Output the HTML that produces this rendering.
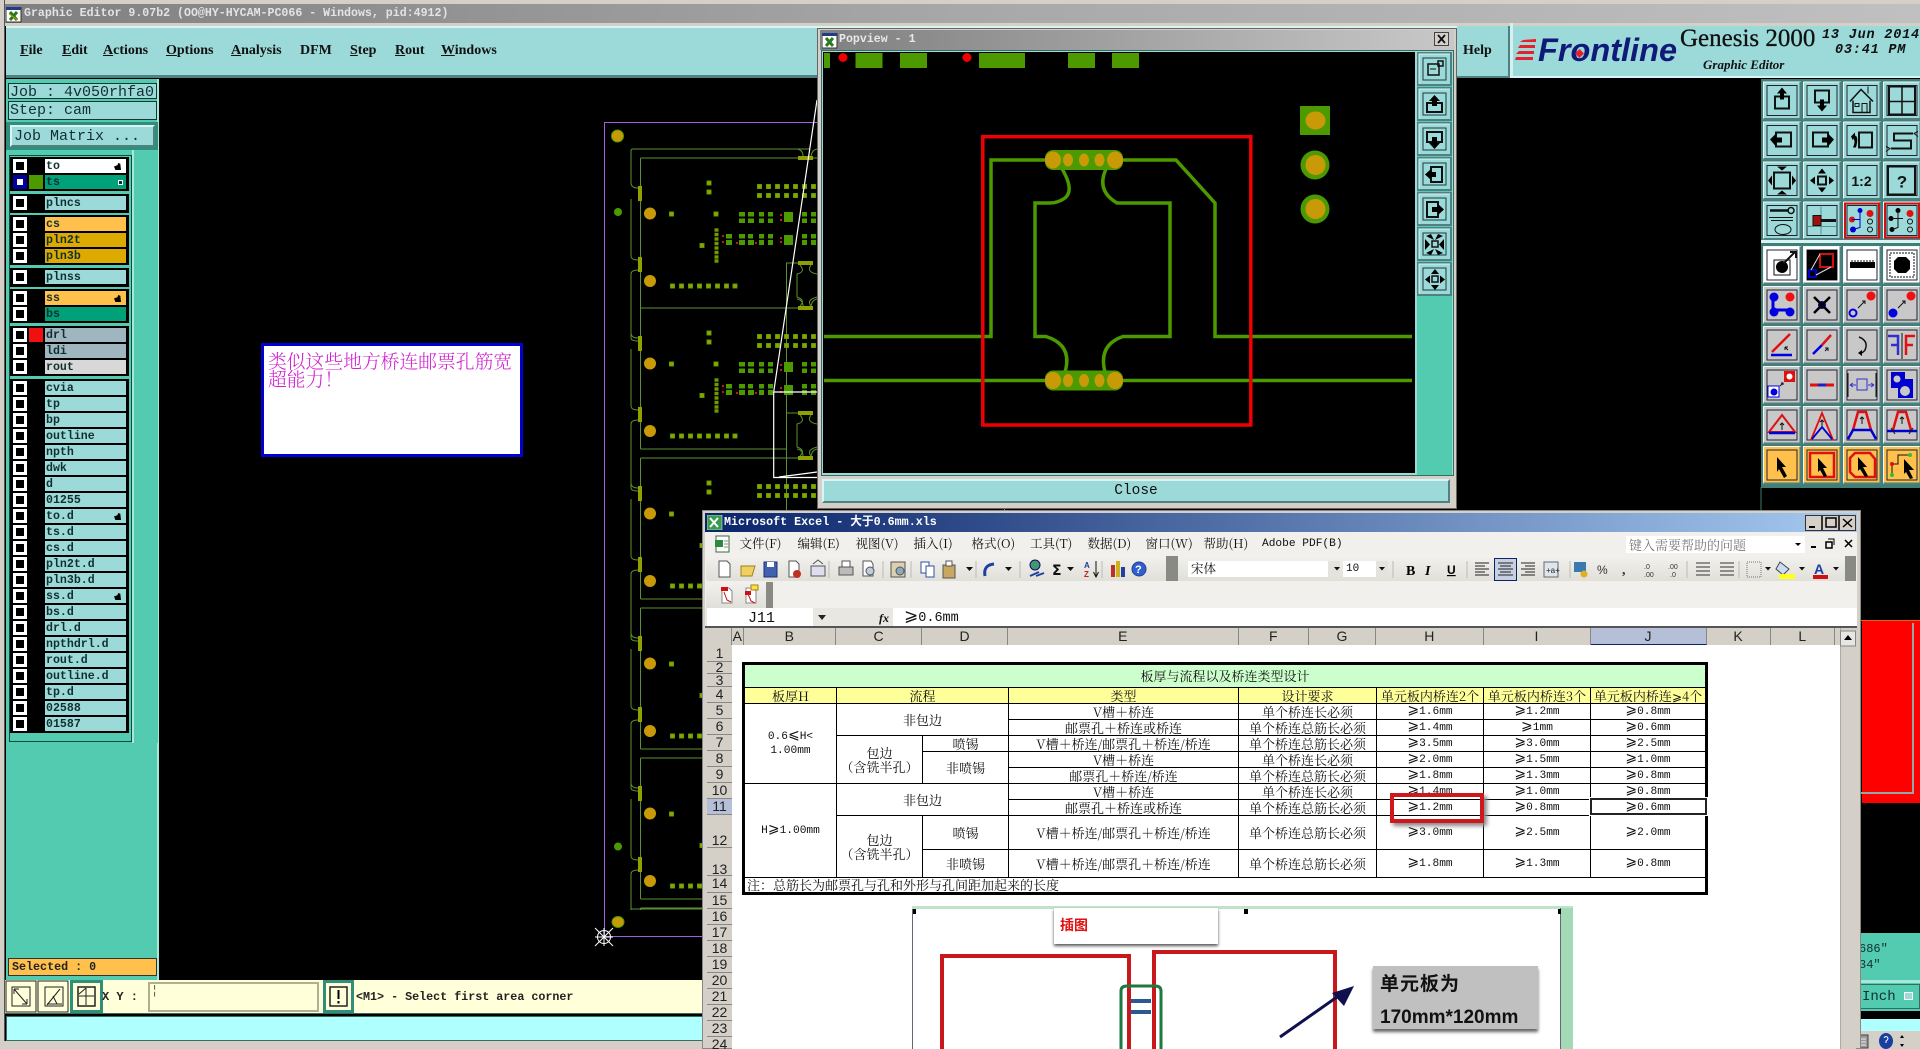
<!DOCTYPE html>
<html lang="zh"><head><meta charset="utf-8"><title>Graphic Editor</title>
<style>
html,body{margin:0;padding:0;background:#000}
#p{position:relative;width:1920px;height:1049px;overflow:hidden;background:#000;font-family:"Liberation Mono","Noto Serif CJK SC",monospace}
#p>div,#p>svg,.a{position:absolute}
.m{font:bold 14px "Liberation Serif",serif;color:#111;top:43px}
.r{position:absolute;left:11px;width:117px;height:15px}
.r i{position:absolute;left:2px;top:0;width:8px;height:8px;border:3px solid #fff;background:#000}
.r b{position:absolute;left:34px;top:0;width:81px;height:14px;background:#9cd9d9;font:bold 11.6px/15px "Liberation Mono",monospace;color:#103030;padding-left:1px;box-sizing:border-box}
.r u{position:absolute;right:5px;top:4px;width:7px;height:7px;background:#000;clip-path:polygon(0 50%,50% 30%,60% 0,90% 10%,100% 100%,20% 100%)}
.g{background:#000;left:10px;width:119px}
.mn{font:12.5px "Noto Serif CJK SC",serif;color:#111;top:534px}
.ch{top:628px;height:17px;background:#d4d0c8;border-right:1px solid #888;box-sizing:border-box;font:14px/17px "Liberation Sans",sans-serif;color:#222;text-align:center}
.rh{left:707px;width:25px;background:#d4d0c8;border-bottom:1px solid #888;box-sizing:border-box;font:14px/15px "Liberation Sans",sans-serif;color:#222;text-align:center}
table{position:absolute;left:742px;top:662px;width:965px;border-collapse:collapse;table-layout:fixed;background:#fff;border:3px solid #000;font:13px/14px "Noto Serif CJK SC",serif;color:#111}
td{border:1px solid #000;padding:0;text-align:center;overflow:hidden;white-space:nowrap}
.n{font:11.2px/14px "Liberation Mono",monospace}
em{font:normal 14px/0 "DejaVu Sans",sans-serif}
</style></head><body><div id="p">

<!-- PCB background -->
<svg style="left:0;top:0" width="1920" height="1049" viewBox="0 0 1920 1049">
<defs>
<clipPath id="cl"><rect x="625" y="100" width="200" height="810"/></clipPath>
<g id="sp"><rect x="-2.5" y="-2.5" width="5" height="5" fill="#4c9900"/><circle r="2" fill="#8fa000"/></g>
<g id="sv"><rect x="-2" y="-1.7" width="4" height="3.4" fill="#6f9a00"/></g>
<g id="bd">
<path fill="none" stroke="#5c9130" d="M638 188Q631 188 631 183M631 199V256Q631 260 638 260M638 270Q631 270 631 274V338M640.5 308V449M640.5 449H786.5V263H798M640.5 308H800M797 149Q803 150 803 156M817 149Q812 150 811 156M800 265Q806 272 797 274V297Q806 300 800 306M811 265Q806 272 817 274M811 306Q806 300 817 297M631 338Q631 341 638 341"/>
<rect x="638" y="186" width="4" height="15" fill="#8fa000"/><rect x="638" y="257" width="4" height="15" fill="#8fa000"/>
<rect x="798" y="156" width="15" height="4" fill="#8fa000"/><rect x="798" y="261" width="15" height="4" fill="#8fa000"/><rect x="798" y="306" width="15" height="4" fill="#8fa000"/>
<circle cx="650" cy="213.5" r="6" fill="#c99a08"/><circle cx="650" cy="281" r="6" fill="#c99a08"/>
<use href="#sp" x="709" y="183"/><use href="#sp" x="709" y="192"/><use href="#sp" x="671.5" y="214"/><use href="#sp" x="716" y="214"/><use href="#sp" x="702" y="245.5"/>
<use href="#sp" x="759.5" y="186.5"/><use href="#sp" x="768.5" y="186.5"/><use href="#sp" x="777.5" y="186.5"/><use href="#sp" x="786.5" y="186.5"/><use href="#sp" x="795.5" y="186.5"/><use href="#sp" x="804.5" y="186.5"/><use href="#sp" x="813.5" y="186.5"/>
<use href="#sp" x="759.5" y="195.5"/><use href="#sp" x="768.5" y="195.5"/><use href="#sp" x="777.5" y="195.5"/><use href="#sp" x="786.5" y="195.5"/><use href="#sp" x="795.5" y="195.5"/><use href="#sp" x="804.5" y="195.5"/><use href="#sp" x="813.5" y="195.5"/>
<use href="#sv" x="716.5" y="230"/><use href="#sv" x="716.5" y="234.5"/><use href="#sv" x="716.5" y="239"/><use href="#sv" x="716.5" y="243.5"/><use href="#sv" x="716.5" y="248"/><use href="#sv" x="716.5" y="252.5"/><use href="#sv" x="716.5" y="257"/><use href="#sv" x="716.5" y="261"/>
<use href="#sp" x="672.5" y="286"/><use href="#sp" x="681.5" y="286"/><use href="#sp" x="690.5" y="286"/><use href="#sp" x="699.5" y="286"/><use href="#sp" x="708.5" y="286"/><use href="#sp" x="717.5" y="286"/><use href="#sp" x="726.5" y="286"/><use href="#sp" x="735" y="286"/>
<path fill="#4c9900" d="M739 212h6v4.500h-6zM748 212h6v4.500h-6zM759 212h5v4.500h-5zM768 212h5v4.500h-5zM739 218.500h6v4.500h-6zM748 218.500h6v4.500h-6zM759 218.500h5v4.500h-5zM768 218.500h5v4.500h-5zM784 212h9v10h-9zM802 212h5v4.500h-5zM811 212h5v4.500h-5zM802 218.500h5v4.500h-5zM811 218.500h5v4.500h-5zM726 234h6v4.500h-6zM739 234h6v4.500h-6zM748 234h5v4.500h-5zM759 234h5v4.500h-5zM768 234h5v4.500h-5zM726 240h6v5h-6zM739 240h6v5h-6zM748 240h6v5h-6zM759 240h5v5h-5zM768 240h5v5h-5zM784 235h9v10h-9zM802 234h5v4.500h-5zM811 234h5v4.500h-5zM802 240h5v5h-5zM811 240h5v5h-5z"/>
<path fill="#c8181c" d="M780 214h2v2h-2zM780 219h2v2h-2zM722 235h2v2h-2zM722 241h2v2h-2zM736 242h2v2h-2zM755 242h2v2h-2zM780 237h2v2h-2zM780 241h2v2h-2z"/>
</g></defs>
<rect x="604.500" y="122.500" width="400" height="814" fill="none" stroke="#a060e0"/>
<ellipse cx="617.500" cy="136" rx="6" ry="6" fill="#c99a08" stroke="#4c9900"/>
<circle cx="618" cy="212" r="4" fill="#4c9900"/>
<path fill="none" stroke="#5c9130" d="M810 149H633Q631 149 631 151V183M640.500 158H820M640.500 158V308"/>
<g clip-path="url(#cl)"><use href="#bd"/><use href="#bd" y="150"/><use href="#bd" y="300"/><use href="#bd" y="450"/><use href="#bd" y="600"/></g>
<path fill="none" stroke="#5c9130" d="M631 899V908Q631 909 633 909H817"/>
<circle cx="618" cy="846.500" r="4" fill="#4c9900"/><ellipse cx="618" cy="922" rx="6" ry="5.500" fill="#c99a08" stroke="#4c9900"/>
<g stroke="#fff" fill="none"><circle cx="604" cy="937" r="6.500"/><path d="M595 928L613 946M613 928L595 946M604 928V946M595 937H613"/></g>
<path d="M817 100L773.700 392H820M773.700 392V477.500H820M779 477L817 472" fill="none" stroke="#fff" stroke-width="1.200"/>
<rect x="1862" y="621" width="58" height="182" fill="#ff0000"/><path d="M1861 620.500H1920" stroke="#e06020"/>
<path d="M1861 793H1913V623" fill="none" stroke="#9aa6a6" stroke-width="2"/>
<path d="M1761 487V510" stroke="#3a7a70"/>
</svg>

<!-- frame -->
<div style="left:0;top:0;width:1920px;height:4px;background:#d4d0c8"></div>
<div style="left:0;top:0;width:5px;height:1049px;background:#d4d0c8;border-right:1px solid #555;box-sizing:border-box"></div>
<div style="left:5px;top:4px;width:1915px;height:19px;background:linear-gradient(90deg,#808080,#a8a8a8 50%,#c0c0c0);color:#e4e4e4;font:bold 11.6px/19px 'Liberation Mono',monospace;padding-left:19px;box-sizing:border-box">Graphic Editor 9.07b2 (OO@HY-HYCAM-PC066 - Windows, pid:4912)</div>
<svg style="left:6px;top:7px" width="16" height="16"><rect width="15" height="15" fill="#fff" stroke="#333"/><rect width="15" height="3" fill="#223a88"/><path d="M4 5L11 13M11 5L4 13" stroke="#2a7a20" stroke-width="3"/><path d="M3 7L12 13" stroke="#c8a000"/></svg>
<div style="left:5px;top:23px;width:1915px;height:3px;background:#d4d0c8"></div>
<div style="left:6px;top:26px;width:1451px;height:52px;background:#9cd9d9;border-top:2px solid #d8f4f4;border-bottom:3px solid #4f8082;box-sizing:border-box"></div>
<div class="m" style="left:20px"><u>F</u>ile</div><div class="m" style="left:62px"><u>E</u>dit</div><div class="m" style="left:103px"><u>A</u>ctions</div><div class="m" style="left:166px"><u>O</u>ptions</div><div class="m" style="left:231px"><u>A</u>nalysis</div><div class="m" style="left:300px">DFM</div><div class="m" style="left:350px"><u>S</u>tep</div><div class="m" style="left:395px"><u>R</u>out</div><div class="m" style="left:441px"><u>W</u>indows</div>

<!-- Help / logo -->
<div style="left:1457px;top:26px;width:53px;height:52px;background:#9cd9d9;border-right:2px solid #4f8082;border-bottom:2px solid #4f8082;box-sizing:border-box;font:bold 14px/50px 'Liberation Serif',serif;padding-left:6px;color:#111">Help</div>
<div style="left:1510px;top:23px;width:3px;height:55px;background:#d4f0f0"></div>
<div style="left:1513px;top:26px;width:407px;height:52px;background:#9cd9d9;border-bottom:2px solid #d8f4f4;box-sizing:border-box"></div>
<svg style="left:1515px;top:36px" width="24" height="28"><path fill="#e8202c" d="M8 4L21 3V6H5zM5 9H20V12H3zM4 15H19V18H1zM1 21H18V24H0z"/></svg>
<div style="left:1538px;top:31px;font:italic bold 32.500px/38px 'Liberation Sans',sans-serif;color:#101a78">Frontline</div>
<svg style="left:1574px;top:48px" width="11" height="11"><path d="M5.500 1L10 5.500L5.500 10L1 5.500z" fill="#e0202c"/></svg>
<div style="left:1680px;top:24px;font:25px/30px 'Liberation Serif',serif;color:#111;-webkit-text-stroke:.3px #111">Genesis 2000</div>
<div style="left:1703px;top:57px;font:italic bold 13px/16px 'Liberation Serif',serif;color:#111">Graphic Editor</div>
<div style="left:1822px;top:28px;font:italic bold 13.500px/15px 'Liberation Mono',monospace;color:#111;white-space:pre;letter-spacing:.8px">13 Jun 2014</div>
<div style="left:1835px;top:43px;font:italic bold 13.500px/15px 'Liberation Mono',monospace;color:#111;white-space:pre;letter-spacing:.8px">03:41 PM</div>

<!-- left panel -->
<div style="left:6px;top:79px;width:153px;height:901px;background:#52cbb0;border-right:2px solid #a8e8d8;box-sizing:border-box"></div>
<div style="left:8px;top:83px;width:149px;height:16px;background:#9cd9d9;border:1px solid #103a30;box-sizing:border-box;font:15px/17px 'Liberation Mono',monospace;color:#103030;padding-left:1px;white-space:pre">Job : 4v050rhfa0</div>
<div style="left:8px;top:101px;width:149px;height:19px;background:#9cd9d9;border:1px solid #103a30;box-sizing:border-box;font:15px/17px 'Liberation Mono',monospace;color:#103030;padding-left:1px;white-space:pre">Step: cam</div>
<div style="left:6px;top:122px;width:152px;height:28px;background:#2f8f7a"></div>
<div style="left:10px;top:125px;width:145px;height:22px;background:#9cd9d9;border:2px solid;border-color:#d8f4f4 #4f8082 #4f8082 #d8f4f4;box-sizing:border-box;font:15px/20px 'Liberation Mono',monospace;color:#103030;padding-left:2px;white-space:pre">Job Matrix ...</div>
<div style="left:9px;top:155px;width:123px;height:587px;background:#52cbb0;border:1px solid #104a3a;box-sizing:border-box"></div>
<div style="left:132px;top:150px;width:26px;height:593px;background:#52cbb0;border-left:2px solid #a8e8d8;box-sizing:border-box"></div>
<div class="g" style="top:157px;height:34px"></div><div class="g" style="top:194px;height:19px"></div><div class="g" style="top:215px;height:50px"></div><div class="g" style="top:268px;height:19px"></div><div class="g" style="top:289px;height:34px"></div><div class="g" style="top:326px;height:50px"></div><div class="g" style="top:379px;height:354px"></div>
<div style="left:0;top:0;width:0;height:0">
<div class="r" style="top:159px"><i></i><b style="background:#fff">to<u></u></b></div>
<div class="r" style="top:175px"><i style="border-color:#0000a0;background:#fff;width:6px;height:6px;border-width:4px"></i><span class="a" style="left:18px;top:0;width:14px;height:14px;background:#4c9900"></span><b style="background:#00a078;color:#103030">ts<span class="a" style="right:3px;top:5px;width:3px;height:3px;border:1px solid #fff;background:#103030"></span></b></div>
<div class="r" style="top:196px"><i></i><b>plncs</b></div>
<div class="r" style="top:217px"><i></i><b style="background:#ffc04c">cs</b></div>
<div class="r" style="top:233px"><i></i><b style="background:#dcaa00">pln2t</b></div>
<div class="r" style="top:249px"><i></i><b style="background:#dcaa00">pln3b</b></div>
<div class="r" style="top:270px"><i></i><b>plnss</b></div>
<div class="r" style="top:291px"><i></i><b style="background:#ffc04c">ss<u></u></b></div>
<div class="r" style="top:307px"><i></i><b style="background:#00a078">bs</b></div>
<div class="r" style="top:328px"><i></i><span class="a" style="left:18px;top:0;width:14px;height:14px;background:#f01010"></span><b style="background:#9fb5c0">drl</b></div>
<div class="r" style="top:344px"><i></i><b style="background:#9fb5c0">ldi</b></div>
<div class="r" style="top:360px"><i></i><b style="background:#d8d8d8">rout</b></div>
<div class="r" style="top:381px"><i></i><b>cvia</b></div>
<div class="r" style="top:397px"><i></i><b>tp</b></div>
<div class="r" style="top:413px"><i></i><b>bp</b></div>
<div class="r" style="top:429px"><i></i><b>outline</b></div>
<div class="r" style="top:445px"><i></i><b>npth</b></div>
<div class="r" style="top:461px"><i></i><b>dwk</b></div>
<div class="r" style="top:477px"><i></i><b>d</b></div>
<div class="r" style="top:493px"><i></i><b>01255</b></div>
<div class="r" style="top:509px"><i></i><b>to.d<u></u></b></div>
<div class="r" style="top:525px"><i></i><b>ts.d</b></div>
<div class="r" style="top:541px"><i></i><b>cs.d</b></div>
<div class="r" style="top:557px"><i></i><b>pln2t.d</b></div>
<div class="r" style="top:573px"><i></i><b>pln3b.d</b></div>
<div class="r" style="top:589px"><i></i><b>ss.d<u></u></b></div>
<div class="r" style="top:605px"><i></i><b>bs.d</b></div>
<div class="r" style="top:621px"><i></i><b>drl.d</b></div>
<div class="r" style="top:637px"><i></i><b>npthdrl.d</b></div>
<div class="r" style="top:653px"><i></i><b>rout.d</b></div>
<div class="r" style="top:669px"><i></i><b>outline.d</b></div>
<div class="r" style="top:685px"><i></i><b>tp.d</b></div>
<div class="r" style="top:701px"><i></i><b>02588</b></div>
<div class="r" style="top:717px"><i></i><b>01587</b></div>
</div>
<div style="left:8px;top:958px;width:149px;height:18px;background:#ffc04c;border:1px solid #333;box-sizing:border-box;font:bold 11.7px/16px 'Liberation Mono',monospace;color:#222;padding-left:3px;white-space:pre">Selected : 0</div>

<!-- bottom toolbar -->
<div style="left:5px;top:980px;width:700px;height:34px;background:#ffffd9;border-bottom:1px solid #3a6a60;box-sizing:border-box"></div>
<svg style="left:5px;top:980px" width="350" height="34">
<g fill="#d8d8c0" stroke="#222"><rect x="1" y="1" width="30" height="31" fill="#ffffd9"/><rect x="33" y="1" width="30" height="31" fill="#ffffd9"/></g>
<rect x="65" y="0" width="33" height="33" fill="#2f8f7a"/><rect x="68" y="3" width="27" height="27" fill="#ffffd9"/>
<rect x="318" y="0" width="31" height="33" fill="#2f8f7a"/><rect x="321" y="3" width="25" height="27" fill="#ffffd9"/>
<g fill="none" stroke="#222"><rect x="7" y="7" width="18" height="19"/><path d="M9 9L22 24M9 9h5M9 9v5M22 24h-5M22 24v-5"/><rect x="40" y="7" width="18" height="19"/><path d="M42 25L55 9M42 24H57M48 16L52 24"/><rect x="73" y="7" width="17" height="19" stroke-width="1.500"/><path d="M81 8V25M74 16H89M74 14L81 8"/><rect x="325" y="7" width="17" height="19" stroke-width="1.500"/></g>
<rect x="332.500" y="10" width="2" height="9"/><rect x="332.500" y="21" width="2" height="2.500"/>
</svg>
<div style="left:102px;top:989px;font:bold 12px/16px 'Liberation Mono',monospace;color:#222;white-space:pre">X Y :</div>
<div style="left:148px;top:982px;width:171px;height:30px;background:#ffffd9;border:2px solid #b0b090;box-sizing:border-box;font:12px/14px 'Liberation Mono',monospace;color:#555;padding-left:1px">¦</div>
<div style="left:356px;top:989px;font:bold 11.700px/16px 'Liberation Mono',monospace;color:#222;white-space:pre">&lt;M1&gt; - Select first area corner</div>
<div style="left:6px;top:1016px;width:700px;height:25px;background:#b0ffff;border:1px solid #3a6a60;box-sizing:border-box"></div>
<div style="left:0;top:1041px;width:706px;height:8px;background:#d4d0c8"></div>

<!-- callout -->
<div style="left:261px;top:343px;width:262px;height:114px;background:#fff;border:3.500px solid #0000d0;box-sizing:border-box;font:300 18.800px/18px 'Noto Serif CJK SC',serif;color:#d020d0;padding:6px 0 0 4px;word-break:break-all">类似这些地方桥连邮票孔筋宽超能力！</div>

<!-- Popview -->
<div style="left:817px;top:28px;width:640px;height:481px;background:#d4d0c8;border:1px solid #666;box-sizing:border-box"></div>
<div style="left:820px;top:30px;width:634px;height:20px;background:linear-gradient(90deg,#808080,#c8c8c8);color:#e8e8e8;font:bold 11.600px/20px 'Liberation Mono',monospace;padding-left:19px;box-sizing:border-box;white-space:pre">Popview - 1</div>
<svg style="left:822px;top:33px" width="16" height="16"><rect width="15" height="15" fill="#fff" stroke="#333"/><rect width="15" height="3" fill="#223a88"/><path d="M4 5L11 13M11 5L4 13" stroke="#2a7a20" stroke-width="3"/></svg>
<svg style="left:1434px;top:32px" width="16" height="15"><rect x=".5" y=".5" width="14" height="13" fill="#d4d0c8" stroke="#444"/><path d="M4 3L11 11M11 3L4 11" stroke="#111" stroke-width="1.800"/></svg>
<div style="left:821px;top:50px;width:633px;height:426px;background:#9cd9d9;border:1px solid #3a6a60;box-sizing:border-box"></div>
<div style="left:823px;top:52px;width:592px;height:421px;background:#000"></div>
<div style="left:1417px;top:52px;width:35px;height:423px;background:#52cbb0"></div>
<div style="left:822px;top:479px;width:628px;height:24px;background:#9cd9d9;border:2px solid;border-color:#d8f4f4 #4f8082 #4f8082 #d8f4f4;box-sizing:border-box;font:14.500px/21px 'Liberation Mono',monospace;color:#111;text-align:center">Close</div>
<svg style="left:0;top:0" width="1460" height="510" viewBox="0 0 1460 510">
<defs><g id="tp"><rect x="-39" y="-10" width="78" height="20" rx="8" fill="#4c9900"/><ellipse cx="-31" rx="8" ry="8.500" fill="#c99a08"/><ellipse cx="31" rx="8" ry="8.500" fill="#c99a08"/><ellipse cx="-16" rx="5" ry="6.500" fill="#c99a08"/><ellipse rx="5" ry="6.500" fill="#c99a08"/><ellipse cx="15.500" rx="5" ry="6.500" fill="#c99a08"/></g></defs>
<path fill="#4c9900" d="M824 53h6v15h-6zM855.500 53h27v15h-27zM900 53h27v15h-27zM979 53h46v15h-46zM1068 53h27v15h-27zM1112 53h27v15h-27z"/>
<circle cx="843" cy="57.500" r="4.500" fill="#f00000"/><circle cx="967" cy="57.500" r="4.500" fill="#f00000"/>
<g fill="none" stroke="#4c9900" stroke-width="3.500">
<path d="M824 336.500H991V160H1176L1215 203V336.500H1412M824 380.500H1412"/>
<path d="M1061 167Q1075 190 1065 198Q1058 203 1050 203H1035V336.500H1046Q1073 345 1065 372M1107 167Q1095 190 1117 203H1170V336.500H1123Q1098 345 1105 372"/>
</g>
<use href="#tp" x="1084" y="160"/><use href="#tp" x="1084" y="380.500"/>
<rect x="982.800" y="136.700" width="268" height="288.300" fill="none" stroke="#f00000" stroke-width="3.500"/>
<rect x="1300" y="106" width="30" height="29" fill="#4c9900"/><ellipse cx="1315.500" cy="120.500" rx="10" ry="9" fill="#c99a08"/>
<ellipse cx="1315" cy="165" rx="14.500" ry="14.500" fill="#4c9900"/><ellipse cx="1315.500" cy="165" rx="10" ry="10" fill="#c99a08"/>
<ellipse cx="1315" cy="209" rx="14.500" ry="14.500" fill="#4c9900"/><ellipse cx="1315.500" cy="209" rx="10" ry="10" fill="#c99a08"/>
<defs><g id="pb"><rect width="33" height="32" fill="#9cd9d9" stroke="#4f8082" stroke-width="2"/><path d="M1 31V1H32" stroke="#d8f4f4" fill="none"/><rect x="5" y="5" width="23" height="22" fill="none" stroke="#1a3a3a"/></g></defs>
<g transform="translate(1418,53)"><use href="#pb"/><path d="M10 11h11v11H10zM20 8h5v5h-5z" fill="none" stroke="#111" stroke-width="1.500"/><path d="M12 16h6" stroke="#111"/></g>
<g transform="translate(1418,88)"><use href="#pb"/><rect x="9" y="15" width="15" height="9" fill="none" stroke="#111" stroke-width="2"/><path d="M16.500 7L11 13h3v5h5v-5h3z"/></g>
<g transform="translate(1418,123)"><use href="#pb"/><rect x="9" y="9" width="15" height="10" fill="none" stroke="#111" stroke-width="2"/><path d="M16.500 26L11 20h3v-6h5v6h3z"/></g>
<g transform="translate(1418,158)"><use href="#pb"/><rect x="13" y="9" width="11" height="15" fill="none" stroke="#111" stroke-width="2"/><path d="M7 16.500L13 11v3h5v5h-5v3z"/></g>
<g transform="translate(1418,193)"><use href="#pb"/><rect x="9" y="9" width="11" height="15" fill="none" stroke="#111" stroke-width="2"/><path d="M26 16.500L20 11v3h-6v5h6v3z"/></g>
<g transform="translate(1418,228)"><use href="#pb"/><rect x="14" y="13" width="6" height="6" fill="none" stroke="#111" stroke-width="1.500"/><path d="M8 8L13 6L16 12ZM25 8L20 6L17 12ZM8 25L13 27L16 21ZM25 25L20 27L17 21ZM7 11L12 16.500L7 22ZM26 11L21 16.500L26 22Z"/></g>
<g transform="translate(1418,263)"><use href="#pb"/><rect x="14" y="13" width="6" height="6" fill="none" stroke="#111" stroke-width="1.500"/><path d="M17 6L21 11H13ZM17 27L21 22H13ZM7 16.500L12 12.500V20.500ZM27 16.500L22 12.500V20.500Z"/></g>
</svg>

<!-- Right icon grid -->
<svg style="left:1760px;top:78px" width="160" height="412" viewBox="1760 78 160 412" font-family="Liberation Sans,sans-serif">
<defs><g id="b"><rect width="38" height="38"/><path d="M.5 37.500V.5H37.500" stroke="#f0f8f8" fill="none"/><path d="M.5 37.500H37.500V.5" stroke="#4f7f7f" stroke-width="2" fill="none"/><rect x="4" y="4" width="30" height="30" fill="none" stroke="#223"/></g></defs>
<rect x="1761" y="79" width="159" height="409" fill="#3f7f78"/>
<rect x="1761" y="240" width="159" height="3" fill="#d8f4f4"/>
<g fill="#9cd9d9">
<use href="#b" x="1763" y="81.500"/><use href="#b" x="1803" y="81.500"/><use href="#b" x="1843" y="81.500"/><use href="#b" x="1883" y="81.500"/>
<use href="#b" x="1763" y="121.500"/><use href="#b" x="1803" y="121.500"/><use href="#b" x="1843" y="121.500"/><use href="#b" x="1883" y="121.500"/>
<use href="#b" x="1763" y="161.500"/><use href="#b" x="1803" y="161.500"/><use href="#b" x="1843" y="161.500"/><use href="#b" x="1883" y="161.500"/>
<use href="#b" x="1763" y="201.500"/><use href="#b" x="1803" y="201.500"/><use href="#b" x="1843" y="201.500"/><use href="#b" x="1883" y="201.500"/></g>
<g fill="#fff"><use href="#b" x="1763" y="246"/><use href="#b" x="1803" y="246"/><use href="#b" x="1843" y="246"/><use href="#b" x="1883" y="246"/></g>
<g fill="#c8c8c8">
<use href="#b" x="1763" y="286"/><use href="#b" x="1803" y="286"/><use href="#b" x="1843" y="286"/><use href="#b" x="1883" y="286"/>
<use href="#b" x="1763" y="326"/><use href="#b" x="1803" y="326"/><use href="#b" x="1843" y="326"/><use href="#b" x="1883" y="326"/>
<use href="#b" x="1763" y="366"/><use href="#b" x="1803" y="366"/><use href="#b" x="1843" y="366"/><use href="#b" x="1883" y="366"/>
<use href="#b" x="1763" y="406"/><use href="#b" x="1803" y="406"/><use href="#b" x="1843" y="406"/><use href="#b" x="1883" y="406"/></g>
<g fill="#ffc04c"><use href="#b" x="1763" y="446"/><use href="#b" x="1803" y="446"/><use href="#b" x="1843" y="446"/><use href="#b" x="1883" y="446"/></g>
<!-- r1 -->
<g transform="translate(1763,81.500)"><rect x="12" y="15" width="14" height="12" fill="none" stroke="#111" stroke-width="2"/><path d="M19 6L14 12h3v6h4v-6h3z"/></g>
<g transform="translate(1803,81.500)"><rect x="12" y="9" width="14" height="12" fill="none" stroke="#111" stroke-width="2"/><path d="M19 30L14 24h3v-6h4v6h3z"/></g>
<g transform="translate(1843,81.500)" fill="none" stroke="#111"><path d="M7 20L18 8L30 20M10 19V31H27V19" stroke-width="1.500"/><rect x="12" y="22" width="4" height="3"/><rect x="19" y="22" width="5" height="9"/><path d="M25 12V5"/></g>
<g transform="translate(1883,81.500)" fill="none" stroke="#111"><rect x="6" y="5" width="26" height="28" stroke-width="2"/><path d="M19 5V33M6 20H32" stroke-width="1.500"/></g>
<!-- r2 -->
<g transform="translate(1763,121.500)"><rect x="13" y="11" width="15" height="14" fill="none" stroke="#111" stroke-width="2"/><path d="M7 18L13 12v4h6v5h-6v4z"/></g>
<g transform="translate(1803,121.500)"><rect x="10" y="11" width="15" height="14" fill="none" stroke="#111" stroke-width="2"/><path d="M31 18L25 12v4h-6v5h6v4z"/></g>
<g transform="translate(1843,121.500)"><rect x="16" y="11" width="13" height="15" fill="none" stroke="#111" stroke-width="2"/><path d="M8 15L12 11v3q4 1 1 12h-3q3-7 0-9v2z"/></g>
<g transform="translate(1883,121.500)" fill="none" stroke="#111"><path d="M30 12H11V19H28V27H8" stroke-width="2"/><path d="M35 10L31 12L35 15M3 25L7 27L3 30"/></g>
<!-- r3 -->
<g transform="translate(1763,161.500)"><rect x="11" y="11" width="16" height="16" fill="none" stroke="#111" stroke-width="2"/><path d="M19 9L14 5H24ZM19 29L14 33H24ZM5 19L9 14V24ZM33 19L29 14V24Z"/></g>
<g transform="translate(1803,161.500)"><rect x="15" y="15" width="8" height="8" fill="none" stroke="#111" stroke-width="2"/><path d="M19 7L15 12H23ZM19 31L15 26H23ZM7 19L12 15V23ZM31 19L26 15V23Z"/></g>
<text x="1861.500" y="186" text-anchor="middle" font-size="14" font-weight="bold" fill="#111">1:2</text>
<g transform="translate(1883,161.500)"><rect x="5" y="5" width="27" height="28" fill="none" stroke="#111" stroke-width="2"/><text x="19" y="26" text-anchor="middle" font-size="17" font-weight="bold" fill="#111">?</text></g>
<!-- r4 -->
<g transform="translate(1763,201.500)" fill="none" stroke="#111"><path d="M7 9H26" stroke-width="2.500"/><circle cx="28" cy="9" r="3" stroke-width="1.500"/><path d="M6 16H30M8 19H30"/><ellipse cx="20" cy="28" rx="8" ry="5"/></g>
<g transform="translate(1803,201.500)"><path d="M18 5V33M5 25H33" stroke="#5a9090" fill="none"/><rect x="10" y="14" width="8" height="10" fill="#a01010" stroke="#111"/><path d="M18 19H33" stroke="#111" stroke-width="3"/></g>
<g transform="translate(1843,201.500)"><rect x="2" y="2" width="34" height="34" fill="none" stroke="#d01010" stroke-width="2"/><circle cx="9" cy="18" r="3" fill="#e01010"/><circle cx="17" cy="9" r="2.500" fill="#0000d0"/><circle cx="10" cy="28" r="3" fill="#0000d0"/><path d="M17 9V26L10 28M9 18H17" fill="none" stroke="#0000d0"/><circle cx="27" cy="12" r="3.500" fill="#e01010"/><circle cx="27" cy="20" r="2.500" fill="none" stroke="#111"/><circle cx="27" cy="28" r="2.500" fill="none" stroke="#111"/></g>
<g transform="translate(1883,201.500)"><rect x="2" y="2" width="34" height="34" fill="none" stroke="#d01010" stroke-width="2"/><circle cx="8" cy="17" r="2.500"/><circle cx="15" cy="9" r="2.500"/><circle cx="9" cy="28" r="2.500"/><path d="M15 9V26L9 28M8 17H20" fill="none" stroke="#111"/><circle cx="27" cy="12" r="3.500" fill="#e01010"/><circle cx="27" cy="20" r="2.500" fill="none" stroke="#111"/><circle cx="27" cy="28" r="2.500" fill="none" stroke="#111"/></g>
<!-- r5 -->
<g transform="translate(1763,246)"><circle cx="19" cy="21" r="6"/><rect x="11" y="14" width="16" height="15" fill="none" stroke="#111"/><path d="M21 17L32 6M27 6H33V12" stroke="#111" stroke-width="2" fill="none"/></g>
<g transform="translate(1803,246)"><rect x="4" y="4" width="30" height="30"/><rect x="17" y="8" width="13" height="13" fill="none" stroke="#d01010" stroke-width="2"/><rect x="6" y="24" width="7" height="7" fill="none" stroke="#0000d0" stroke-width="2"/><path d="M8 24L17 8M13 29L28 21" stroke="#ddd"/></g>
<g transform="translate(1843,246)"><rect x="7" y="16" width="25" height="6"/><path d="M9 14V17M12 14V17M15 14V17M18 14V17M21 14V17M24 14V17M27 14V17M30 14V17" stroke="#111"/></g>
<g transform="translate(1883,246)"><rect x="7" y="7" width="24" height="24" fill="none" stroke="#111" stroke-dasharray="2 1"/><path d="M15 11H23L27 15V23L23 27H15L11 23V15Z"/></g>
<!-- r6 -->
<g transform="translate(1763,286)"><path d="M10 10V24H26" fill="none" stroke="#0000e0" stroke-width="3"/><circle cx="11" cy="11" r="4.500" fill="#0000e0"/><circle cx="11" cy="26" r="4.500" fill="#0000e0"/><circle cx="27" cy="26" r="4.500" fill="#0000e0"/><circle cx="27" cy="11" r="4.500" fill="#f01010"/></g>
<g transform="translate(1803,286)"><circle cx="19" cy="19" r="4" fill="#000090"/><path d="M11 11L27 27M27 11L11 27" stroke="#000" stroke-width="2.500"/></g>
<g transform="translate(1843,286)"><circle cx="28" cy="10" r="4.500" fill="#f01010"/><circle cx="10" cy="27" r="3.500" fill="none" stroke="#0000e0" stroke-width="2"/><path d="M15 22L22 15M19 15H22V18" stroke="#111" fill="none"/></g>
<g transform="translate(1883,286)"><circle cx="28" cy="10" r="4.500" fill="#f01010"/><circle cx="10" cy="27" r="4.500" fill="#0000e0"/><path d="M15 22L22 15M19 15H22V18" stroke="#111" fill="none"/></g>
<!-- r7 -->
<g transform="translate(1763,326)"><path d="M9 26L27 8" stroke="#e01010" stroke-width="2.500"/><path d="M8 29H29" stroke="#0000e0" stroke-width="2.500"/><path d="M22 21L25 24M22 21V24M22 21H25" stroke="#111" fill="none"/></g>
<g transform="translate(1803,326)"><path d="M10 28L19 19" stroke="#0000e0" stroke-width="2.500"/><path d="M19 19L28 9" stroke="#e01010" stroke-width="2.500"/><path d="M22 25L25 22M22 22H25V25" stroke="#111" fill="none"/></g>
<g transform="translate(1843,326)"><path d="M16 11Q26 15 22 24Q20 27 17 27" fill="none" stroke="#111" stroke-width="1.500"/><path d="M15 27L19 24V30Z"/></g>
<g transform="translate(1883,326)"><path d="M5 10H15V29M8 19H14" fill="none" stroke="#3030d0" stroke-width="2.500"/><path d="M19 7V33" stroke="#111"/><path d="M32 10H23V29M23 19H30" fill="none" stroke="#e01010" stroke-width="2.500"/></g>
<!-- r8 -->
<g transform="translate(1763,366)"><rect x="21" y="5" width="11" height="11" fill="#e01010"/><circle cx="26.500" cy="10.500" r="3" fill="#fff"/><rect x="5" y="20" width="11" height="11" fill="#fff" stroke="#0000e0"/><circle cx="11" cy="26" r="3.500" fill="#0000e0"/><path d="M17 20L20 17M18 17H20V19" stroke="#111" fill="none"/></g>
<g transform="translate(1803,366)"><path d="M7 19H31" stroke="#e01010" stroke-width="3"/><path d="M15 19H23" stroke="#2020c0" stroke-width="3"/></g>
<g transform="translate(1843,366)" fill="none" stroke="#3030d0"><path d="M5 7V31M33 7V31" stroke="#111"/><rect x="14" y="13" width="10" height="11"/><path d="M7 19H13M25 19H31M7 19L10 17M7 19L10 21M31 19L28 17M31 19L28 21"/></g>
<g transform="translate(1883,366)"><path d="M8 6H22V13H30V32H15V22H8Z" fill="#0000d0"/><circle cx="14" cy="13" r="3.500" fill="#c8c8c8"/><circle cx="22" cy="25" r="5" fill="#c8c8c8"/></g>
<!-- r9 -->
<g transform="translate(1763,406)"><path d="M19 9L6 26H32Z" fill="none" stroke="#e01010" stroke-width="2"/><path d="M6 27H32" stroke="#0000d0" stroke-width="2.500"/><path d="M19 17V24M17 19L19 17L21 19" stroke="#111" fill="none"/></g>
<g transform="translate(1803,406)"><path d="M8 34L19 7L30 34" fill="none" stroke="#e01010" stroke-width="1.800"/><path d="M9 33L19 21L29 33" fill="none" stroke="#0000d0" stroke-width="1.800"/><path d="M19 14V20M17 16L19 14L21 16" stroke="#111" fill="none"/></g>
<g transform="translate(1843,406)"><path d="M10 24L15 6H23L28 24" fill="none" stroke="#e01010" stroke-width="2.500"/><path d="M5 33L10 24H28L33 33" fill="none" stroke="#0000d0" stroke-width="2.500"/><path d="M19 11V18M17 13L19 11L21 13" stroke="#111" fill="none"/></g>
<g transform="translate(1883,406)"><path d="M10 24L15 6H23L28 24" fill="none" stroke="#e01010" stroke-width="2.500"/><path d="M4 25H34" stroke="#0000d0" stroke-width="2.500"/><path d="M8 22L12 28M30 22L26 28" stroke="#111"/><path d="M19 11V18M17 13L19 11L21 13" stroke="#111" fill="none"/></g>
<!-- r10 -->
<g transform="translate(1763,446)"><path d="M14 11L23 21L19 21L24 30L21 32L16 23L14 26Z"/></g>
<g transform="translate(1803,446)"><rect x="7" y="7" width="24" height="24" fill="none" stroke="#e01010" stroke-width="2.500"/><path d="M15 12L24 22L20 22L24 30L21 31L17 24L15 26Z"/></g>
<g transform="translate(1843,446)"><path d="M12 7H27L32 13V31H12L7 26V12Z" fill="none" stroke="#e01010" stroke-width="2.500"/><path d="M15 11L24 21L20 21L25 30L22 31L17 23L15 25Z"/></g>
<g transform="translate(1883,446)"><path d="M9 30V18H15V9H26" fill="none" stroke="#111"/><circle cx="9" cy="18" r="2" fill="#e01010"/><circle cx="9" cy="29" r="2" fill="#30c030"/><circle cx="27" cy="9" r="2" fill="#30c030"/><path d="M21 13L31 24L26 24L30 32L27 33L23 26L21 28Z"/></g>
<rect x="1761" y="486" width="159" height="2" fill="#3f7f78"/>
</svg>

<!-- right bottom -->
<div style="left:1860px;top:933px;width:60px;height:116px;background:#52cbb0"></div>
<div style="left:1859px;top:941px;font:12px/16px 'Liberation Mono',monospace;color:#103030;white-space:pre">686"</div>
<div style="left:1859px;top:957px;font:12px/16px 'Liberation Mono',monospace;color:#103030;white-space:pre">34"</div>
<div style="left:1860px;top:980px;width:60px;height:3px;background:#a8e8d8"></div>
<div style="left:1858px;top:984px;width:62px;height:25px;background:#52cbb0;border:1px solid #2f6f60;box-sizing:border-box;font:14px/24px 'Liberation Mono',monospace;color:#103030;padding-left:3px">Inch</div>
<div style="left:1904px;top:992px;width:9px;height:8px;background:#9cd9d9;border:1px solid #fff;box-sizing:border-box"></div>
<div style="left:1860px;top:1011px;width:60px;height:8px;background:#000"></div>
<div style="left:1860px;top:1019px;width:60px;height:12px;background:#b0ffff"></div>
<div style="left:1850px;top:1031px;width:70px;height:18px;background:#d4d0c8"></div>
<svg style="left:1850px;top:1031px" width="70" height="18"><rect x="5" y="4" width="13" height="13" fill="#999" stroke="#444"/><path d="M7 8H16M7 11H16M7 14H16" stroke="#eee"/><ellipse cx="36" cy="10" rx="7" ry="8" fill="#1a3fa0"/><path d="M34 7Q36 4 38 7Q38 9 36 10V12" fill="none" stroke="#fff"/><path d="M50 7H54L52 4ZM50 13H54L52 16Z"/></svg>

<!-- Excel -->
<div style="left:702px;top:510px;width:1159px;height:539px;background:#d4d0c8;border:1px solid #888;box-sizing:border-box"></div>
<div style="left:705px;top:513px;width:1152px;height:19px;background:linear-gradient(90deg,#0a246a,#a6caf0);color:#fff;font:bold 11.700px/19px 'Liberation Mono','Noto Sans CJK SC',monospace;padding-left:19px;box-sizing:border-box;white-space:pre">Microsoft Excel - 大于0.6mm.xls</div>
<svg style="left:707px;top:515px" width="16" height="15"><rect width="15" height="15" fill="#3a9a50" stroke="#fff" stroke-width=".5"/><path d="M3 3L11 12M11 3L3 12" stroke="#fff" stroke-width="2"/></svg>
<svg style="left:1805px;top:515px" width="52" height="16"><g fill="#d4d0c8" stroke="#333"><rect x=".5" y=".5" width="16" height="15"/><rect x="17.500" y=".5" width="16" height="15"/><rect x="34.500" y=".5" width="16" height="15"/></g><path d="M4 12H10" stroke="#000" stroke-width="2"/><rect x="21" y="3" width="10" height="9" fill="none" stroke="#000" stroke-width="1.500"/><path d="M38 4L47 12M47 4L38 12" stroke="#000" stroke-width="1.500"/></svg>
<div style="left:705px;top:532px;width:1152px;height:76px;background:#f1f0ed"></div>
<div class="mn" style="left:739.500px">文件(F)</div><div class="mn" style="left:797.500px">编辑(E)</div><div class="mn" style="left:855.500px">视图(V)</div><div class="mn" style="left:913.500px">插入(I)</div><div class="mn" style="left:971.500px">格式(O)</div><div class="mn" style="left:1030px">工具(T)</div><div class="mn" style="left:1087.500px">数据(D)</div><div class="mn" style="left:1145.500px">窗口(W)</div><div class="mn" style="left:1203.500px">帮助(H)</div>
<div style="left:1262px;top:537px;font:11.200px/15px 'Liberation Mono',monospace;color:#111;white-space:pre">Adobe PDF(B)</div>
<svg style="left:714px;top:534px" width="18" height="20"><rect x="2" y="2" width="13" height="16" fill="#fff" stroke="#3a6a3a"/><rect x="1" y="6" width="8" height="7" fill="#2a8a40"/><path d="M10 7h4M10 10h4M10 13h4" stroke="#888"/></svg>
<div style="left:1626px;top:536px;width:179px;height:17px;background:#fff;font:13px/17px 'Noto Serif CJK SC',serif;color:#777;padding-left:3px;box-sizing:border-box">键入需要帮助的问题</div>
<svg style="left:1795px;top:536px" width="62" height="18"><path d="M0 7H6L3 10Z"/><path d="M16 11H21" stroke="#000" stroke-width="2"/><rect x="31" y="6" width="6" height="6" fill="none" stroke="#000" stroke-width="1.500"/><path d="M33 3H39V9" fill="none" stroke="#000"/><path d="M50 4L57 11M57 4L50 11" stroke="#000" stroke-width="1.500"/></svg>

<div style="left:706px;top:556px;width:1150px;height:25px;background:linear-gradient(180deg,#f2f1ee,#e0dfd8);border-radius:3px"></div>
<div style="left:706px;top:582px;width:67px;height:26px;background:linear-gradient(180deg,#f2f1ee,#e0dfd8)"></div>
<div style="left:766px;top:582px;width:7px;height:26px;background:#8a8a84"></div>
<div style="left:1166px;top:556px;width:12px;height:25px;background:#8a8a84"></div>
<div style="left:1845px;top:556px;width:11px;height:25px;background:#8a8a84"></div>
<svg style="left:705px;top:556px" width="480" height="52">
<g fill="none" stroke="#555">
<path d="M14 5H22L25 8V21H14Z" fill="#fff"/>
<path d="M36 10H50L47 20H36Z" fill="#f0d060" stroke="#a08020"/>
<rect x="59" y="6" width="13" height="15" fill="#4060b0" stroke="#203070"/><rect x="62" y="6" width="7" height="5" fill="#fff" stroke="none"/>
<path d="M84 5H91L94 8V21H84Z" fill="#fff"/><circle cx="92" cy="18" r="4" fill="#c03020" stroke="none"/>
<rect x="106" y="10" width="14" height="10" fill="#dde"/><path d="M108 8L113 4L118 8" />
<path d="M124 5V22" stroke="#bbb"/>
<rect x="134" y="11" width="14" height="8" fill="#bbb"/><rect x="137" y="5" width="8" height="6" fill="#fff"/>
<path d="M158 5H166L168 8V20H158Z" fill="#fff"/><circle cx="165" cy="15" r="4" fill="#bcd"/>
<path d="M178 5V22" stroke="#bbb"/>
<rect x="186" y="6" width="14" height="15" fill="#dcd0b0"/><circle cx="195" cy="15" r="4" fill="#8ab"/>
<path d="M206 5V22" stroke="#bbb"/>
<rect x="216" y="6" width="8" height="11" fill="#fff" stroke="#3050a0"/><rect x="221" y="10" width="8" height="11" fill="#fff" stroke="#3050a0"/>
<rect x="238" y="9" width="12" height="13" fill="#c8a860"/><rect x="241" y="5" width="6" height="5" fill="#fff"/>
<path d="M271 5V22" stroke="#bbb"/>
<path d="M289 8Q278 9 280 20" stroke="#2040a0" stroke-width="3"/>
<path d="M315 5V22" stroke="#bbb"/>
<circle cx="330" cy="9" r="5" fill="#3a9a70" stroke="#206"/><path d="M325 20L334 16M331 20L339 17" stroke="#2040a0" stroke-width="2"/>
<path d="M397 5V22" stroke="#bbb"/>
<rect x="406" y="9" width="4" height="12" fill="#c03020" stroke="none"/><rect x="411" y="5" width="4" height="16" fill="#d0b020" stroke="none"/><rect x="416" y="11" width="4" height="10" fill="#2040a0" stroke="none"/>
<circle cx="434" cy="13" r="7" fill="#3060d0" stroke="#204090"/>
</g>
<path d="M261 11H268L264.500 15ZM300 11H307L303.500 15ZM362 11H369L365.500 15Z" fill="#111"/>
<text x="347" y="19" font-family="DejaVu Sans,sans-serif" font-size="14" font-weight="bold" fill="#111">Σ</text>
<text x="379" y="12" font-family="Liberation Sans,sans-serif" font-size="8" font-weight="bold" fill="#2040a0">A</text>
<text x="379" y="21" font-family="Liberation Sans,sans-serif" font-size="8" font-weight="bold" fill="#c02020">Z</text>
<path d="M391 5V20M388.500 16L391 21L393.500 16" fill="none" stroke="#111"/>
<text x="430" y="17" font-family="Liberation Sans,sans-serif" font-size="11" font-weight="bold" fill="#fff">?</text>
<g><path d="M17 32H24L27 35V47H17Z" fill="#fff" stroke="#888"/><path d="M16 31H23V35H16Z" fill="#d01010"/><path d="M19 36L22 44L26 46" fill="none" stroke="#d01010"/><path d="M41 32H48L51 35V47H41Z" fill="#fff" stroke="#888"/><path d="M40 35H46V39H40Z" fill="#d01010"/><rect x="46" y="29" width="7" height="5" fill="#ffe040" stroke="#a08020"/><path d="M43 38L46 45L50 47" fill="none" stroke="#d01010"/></g>
</svg>
<div style="left:1188px;top:561px;width:152px;height:16px;background:#fff;font:12.500px/15px 'Noto Serif CJK SC',serif;color:#111;padding-left:3px;box-sizing:border-box">宋体</div>
<div style="left:1328px;top:561px;width:12px;height:16px;background:#e4e3de"></div>
<div style="left:1343px;top:561px;width:45px;height:16px;background:#fff;font:11px/16px 'Liberation Mono',monospace;color:#111;padding-left:3px;box-sizing:border-box">10</div>
<div style="left:1376px;top:561px;width:12px;height:16px;background:#e4e3de"></div>
<svg style="left:1320px;top:556px" width="530" height="26">
<path d="M14 11H20L17 14.500ZM59 11H65L62 14.500Z" fill="#111"/>
<path d="M73 5V22M147 5V22M250 5V22M367 5V22M419 5V22" stroke="#bbb"/>
<rect x="174.500" y="2.500" width="22" height="22" fill="#c8d0e0" stroke="#0a246a"/>
<text x="86" y="19" font-family="Liberation Serif,serif" font-size="14" font-weight="bold">B</text>
<text x="105" y="19" font-family="Liberation Serif,serif" font-size="14" font-style="italic" font-weight="bold">I</text>
<text x="127" y="18" font-family="Liberation Sans,sans-serif" font-size="12" font-weight="bold" text-decoration="underline">U</text>
<g stroke="#222"><path d="M155 7H169M155 10H165M155 13H169M155 16H165M155 19H169M178 7H193M180 10H191M178 13H193M180 16H191M178 19H193M201 7H215M205 10H215M201 13H215M205 16H215M201 19H215"/></g>
<rect x="224" y="6" width="14" height="15" fill="#dfe6ea" stroke="#667"/><text x="226" y="17" font-family="Liberation Sans,sans-serif" font-size="8" fill="#223">+a+</text>
<rect x="254" y="6" width="12" height="10" fill="#3a7ab0"/><circle cx="264" cy="18" r="3.500" fill="#e0b020"/>
<text x="277" y="18" font-family="Liberation Sans,sans-serif" font-size="12" fill="#333">%</text>
<text x="302" y="18" font-family="Liberation Serif,serif" font-size="14" font-weight="bold" fill="#333">,</text>
<text x="324" y="13" font-family="Liberation Sans,sans-serif" font-size="7" fill="#333">.0</text><text x="324" y="21" font-family="Liberation Sans,sans-serif" font-size="7" fill="#333">.00</text>
<text x="348" y="13" font-family="Liberation Sans,sans-serif" font-size="7" fill="#333">.00</text><text x="350" y="21" font-family="Liberation Sans,sans-serif" font-size="7" fill="#333">.0</text>
<path d="M376 7H390M376 11H390M376 15H390M376 19H390M400 7H414M400 11H414M400 15H414M400 19H414" stroke="#333"/>
<rect x="427" y="6" width="14" height="15" fill="none" stroke="#777" stroke-dasharray="1 1"/><path d="M445 11H451L448 14.500Z" fill="#111"/>
<path d="M460 6L469 13L463 19L456 13Z" fill="#cde" stroke="#445"/><rect x="459" y="18" width="16" height="5" fill="#ffff20"/><path d="M479 11H485L482 14.500Z" fill="#111"/>
<text x="494" y="18" font-family="Liberation Sans,sans-serif" font-size="14" font-weight="bold" fill="#1a3fa0">A</text><rect x="493" y="19" width="15" height="4" fill="#d01010"/><path d="M513 11H519L516 14.500Z" fill="#111"/>
</svg>

<!-- Formula -->
<div style="left:705px;top:608px;width:1152px;height:19px;background:#e8e7e2"></div>
<div style="left:707px;top:608px;width:106px;height:18px;background:#fff;font:15px/22px 'Liberation Mono',monospace;color:#111;padding-left:41px;box-sizing:border-box;overflow:hidden">J11</div>
<div style="left:818px;top:615px;width:0;height:0;border:4px solid transparent;border-top:5px solid #222;border-bottom:0"></div>
<div style="left:879px;top:609px;font:italic bold 12px/18px 'Liberation Serif',serif;color:#111">fx</div>
<div style="left:893px;top:608px;width:964px;height:18px;background:#fff;font:13.500px/22px 'Liberation Mono',monospace;color:#111;padding-left:11px;box-sizing:border-box;overflow:hidden"><em style="font-size:17px">⩾</em>0.6mm</div>

<!-- headers -->
<div style="left:705px;top:626px;width:1152px;height:2px;background:#555"></div>
<div style="left:707px;top:628px;width:25px;height:17px;background:#d4d0c8;border-right:1px solid #888;box-sizing:border-box"></div>
<div class="ch" style="left:732px;width:11.500px">A</div><div class="ch" style="left:743.500px;width:92.500px">B</div><div class="ch" style="left:836px;width:86px">C</div><div class="ch" style="left:922px;width:86px">D</div><div class="ch" style="left:1008px;width:230.500px">E</div><div class="ch" style="left:1238.500px;width:70.500px">F</div><div class="ch" style="left:1309px;width:67px">G</div><div class="ch" style="left:1376px;width:107.500px">H</div><div class="ch" style="left:1483.500px;width:107px">I</div><div class="ch" style="left:1590.500px;width:116px;background:#b5bfd8;border-bottom:1px solid #0a246a">J</div><div class="ch" style="left:1706.500px;width:64px">K</div><div class="ch" style="left:1770.500px;width:64.500px">L</div>
<div style="left:1835px;top:628px;width:5px;height:17px;background:#d4d0c8"></div>
<div style="left:732px;top:645px;width:1108px;height:404px;background:#fff"></div>
<div style="left:1840px;top:628px;width:16px;height:421px;background:#d4d0c8;border-left:1px solid #aaa;box-sizing:border-box"></div>
<svg style="left:1840px;top:628px" width="16" height="20"><rect x=".5" y="3" width="15" height="15" fill="#e8e6e0" stroke="#888"/><path d="M8 7L12 12H4Z"/></svg>

<div class="rh" style="top:646px;height:16px">1</div><div class="rh" style="top:662px;height:12px;line-height:10px">2</div><div class="rh" style="top:674px;height:13px;line-height:12px">3</div><div class="rh" style="top:687px;height:16px">4</div><div class="rh" style="top:703px;height:16px">5</div><div class="rh" style="top:719px;height:16px">6</div><div class="rh" style="top:735px;height:16px">7</div><div class="rh" style="top:751px;height:16px">8</div><div class="rh" style="top:767px;height:16px">9</div><div class="rh" style="top:783px;height:16px">10</div><div class="rh" style="top:799px;height:16px;background:#b5bfd8">11</div><div class="rh" style="top:815px;height:33px;line-height:50px">12</div><div class="rh" style="top:848px;height:28px;line-height:42px">13</div><div class="rh" style="top:876px;height:17px">14</div><div class="rh" style="top:893px;height:16px">15</div><div class="rh" style="top:909px;height:16px">16</div><div class="rh" style="top:925px;height:16px">17</div><div class="rh" style="top:941px;height:16px">18</div><div class="rh" style="top:957px;height:16px">19</div><div class="rh" style="top:973px;height:16px">20</div><div class="rh" style="top:989px;height:16px">21</div><div class="rh" style="top:1005px;height:16px">22</div><div class="rh" style="top:1021px;height:16px">23</div><div class="rh" style="top:1037px;height:12px">24</div>

<table>
<colgroup><col style="width:93px"><col style="width:86px"><col style="width:86px"><col style="width:230px"><col style="width:138px"><col style="width:107px"><col style="width:107px"><col style="width:116px"></colgroup>
<tr style="height:24px;background:#ccffcc"><td colspan="8">板厚与流程以及桥连类型设计</td></tr>
<tr style="height:16px;background:#ffff99"><td>板厚H</td><td colspan="2">流程</td><td>类型</td><td>设计要求</td><td>单元板内桥连2个</td><td>单元板内桥连3个</td><td>单元板内桥连<em style="font-size:12px">⩾</em>4个</td></tr>
<tr style="height:16px"><td rowspan="5" class="n">0.6<em>⩽</em>H&lt;<br>1.00mm</td><td colspan="2" rowspan="2">非包边</td><td>V槽＋桥连</td><td>单个桥连长必须</td><td class="n"><em>⩾</em>1.6mm</td><td class="n"><em>⩾</em>1.2mm</td><td class="n"><em>⩾</em>0.8mm</td></tr>
<tr style="height:16px"><td>邮票孔＋桥连或桥连</td><td>单个桥连总筋长必须</td><td class="n"><em>⩾</em>1.4mm</td><td class="n"><em>⩾</em>1mm</td><td class="n"><em>⩾</em>0.6mm</td></tr>
<tr style="height:16px"><td rowspan="3">包边<br>（含铣半孔）</td><td>喷锡</td><td>V槽＋桥连/邮票孔＋桥连/桥连</td><td>单个桥连总筋长必须</td><td class="n"><em>⩾</em>3.5mm</td><td class="n"><em>⩾</em>3.0mm</td><td class="n"><em>⩾</em>2.5mm</td></tr>
<tr style="height:16px"><td rowspan="2">非喷锡</td><td>V槽＋桥连</td><td>单个桥连长必须</td><td class="n"><em>⩾</em>2.0mm</td><td class="n"><em>⩾</em>1.5mm</td><td class="n"><em>⩾</em>1.0mm</td></tr>
<tr style="height:16px"><td>邮票孔＋桥连/桥连</td><td>单个桥连总筋长必须</td><td class="n"><em>⩾</em>1.8mm</td><td class="n"><em>⩾</em>1.3mm</td><td class="n"><em>⩾</em>0.8mm</td></tr>
<tr style="height:16px"><td rowspan="4" class="n">H<em>⩾</em>1.00mm</td><td colspan="2" rowspan="2">非包边</td><td>V槽＋桥连</td><td>单个桥连长必须</td><td class="n"><em>⩾</em>1.4mm</td><td class="n"><em>⩾</em>1.0mm</td><td class="n"><em>⩾</em>0.8mm</td></tr>
<tr style="height:16px"><td>邮票孔＋桥连或桥连</td><td>单个桥连总筋长必须</td><td class="n"><em>⩾</em>1.2mm</td><td class="n"><em>⩾</em>0.8mm</td><td class="n"><em>⩾</em>0.6mm</td></tr>
<tr style="height:34px"><td rowspan="2">包边<br>（含铣半孔）</td><td>喷锡</td><td>V槽＋桥连/邮票孔＋桥连/桥连</td><td>单个桥连总筋长必须</td><td class="n"><em>⩾</em>3.0mm</td><td class="n"><em>⩾</em>2.5mm</td><td class="n"><em>⩾</em>2.0mm</td></tr>
<tr style="height:28px"><td>非喷锡</td><td>V槽＋桥连/邮票孔＋桥连/桥连</td><td>单个桥连总筋长必须</td><td class="n"><em>⩾</em>1.8mm</td><td class="n"><em>⩾</em>1.3mm</td><td class="n"><em>⩾</em>0.8mm</td></tr>
<tr style="height:16px"><td colspan="8" style="text-align:left;padding-left:2px">注：总筋长为邮票孔与孔和外形与孔间距加起来的长度</td></tr>
</table>
<div style="left:1590px;top:798px;width:117px;height:17px;border:2px solid #222;outline:1px solid #fff;box-sizing:border-box"></div>
<div style="left:1390px;top:793px;width:94px;height:30px;border:4px solid #d0181c;box-shadow:3px 3px 4px #888;box-sizing:border-box"></div>

<!-- picture -->
<div style="left:912px;top:906px;width:661px;height:143px;background:#fff;border-left:1px solid #667"></div>
<div style="left:912px;top:906px;width:661px;height:3px;background:#bfe3c9"></div>
<div style="left:1560px;top:908px;width:13px;height:141px;background:#a3d9b5;border-left:1px solid #667;box-sizing:border-box"></div>
<div style="left:913px;top:909px;width:3px;height:5px;background:#000"></div><div style="left:1244px;top:909px;width:4px;height:5px;background:#000"></div><div style="left:1558px;top:909px;width:3px;height:5px;background:#000"></div>
<div style="left:1054px;top:908px;width:164px;height:36px;background:#fff;box-shadow:0 2px 3px #555;font:bold 14px/34px 'Noto Sans CJK SC',sans-serif;color:#e01010;padding-left:6px;box-sizing:border-box">插图</div>
<svg style="left:912px;top:906px" width="661" height="143">
<path d="M30 143V50H217V143" fill="none" stroke="#c8181c" stroke-width="4"/><path d="M242 143V46H423V143" fill="none" stroke="#c8181c" stroke-width="4"/>
<path d="M209 143V85Q209 80 215 80H243Q249 80 249 85V143" fill="none" stroke="#1a7a40" stroke-width="3"/>
<path d="M219 95H239M219 106H239" stroke="#2a5a90" stroke-width="4"/>
<path d="M368 131L435 84" stroke="#101050" stroke-width="3"/><path d="M442 80L420 87L432 100Z" fill="#101050"/>
</svg>
<div style="left:1373px;top:966px;width:165px;height:63px;background:#c0c0c0;box-shadow:0 3px 3px #666;font:bold 19px/33px 'Noto Sans CJK SC',sans-serif;color:#111;padding:0 0 0 7px;box-sizing:border-box;white-space:pre;letter-spacing:1px">单元板为<br><span style="font:bold 19px/30px 'Liberation Sans',sans-serif;letter-spacing:0">170mm*120mm</span></div>
</div></body></html>
